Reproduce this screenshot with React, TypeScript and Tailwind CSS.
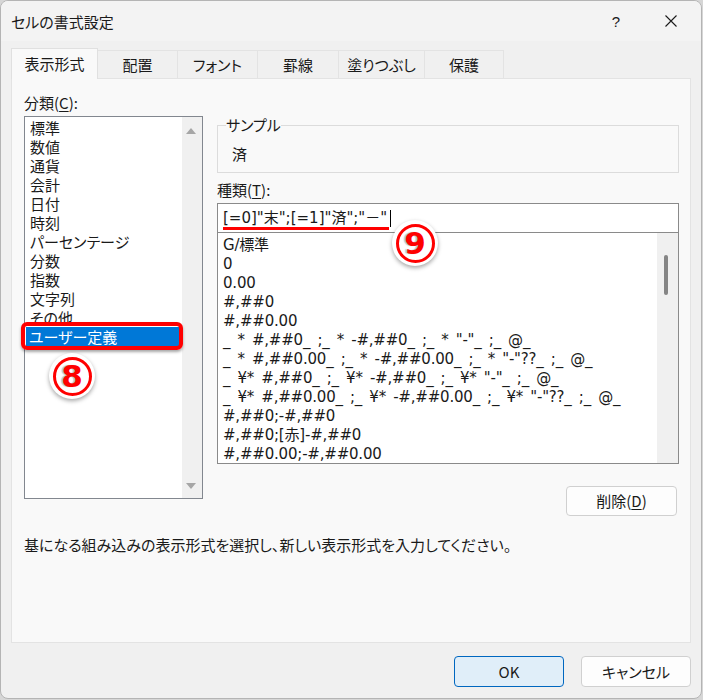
import React from "react";

const categories = [
  "標準",
  "数値",
  "通貨",
  "会計",
  "日付",
  "時刻",
  "パーセンテージ",
  "分数",
  "指数",
  "文字列",
  "その他",
  "ユーザー定義",
];

const formats = [
  "G/標準",
  "0",
  "0.00",
  "#,##0",
  "#,##0.00",
  '_ * #,##0_ ;_ * -#,##0_ ;_ * "-"_ ;_ @_',
  '_ * #,##0.00_ ;_ * -#,##0.00_ ;_ * "-"??_ ;_ @_',
  '_ ¥* #,##0_ ;_ ¥* -#,##0_ ;_ ¥* "-"_ ;_ @_',
  '_ ¥* #,##0.00_ ;_ ¥* -#,##0.00_ ;_ ¥* "-"??_ ;_ @_',
  "#,##0;-#,##0",
  "#,##0;[赤]-#,##0",
  "#,##0.00;-#,##0.00",
];

const tabs = [
  { label: "配置", w: "w-[80px]" },
  { label: "フォント", w: "w-[80px]" },
  { label: "罫線", w: "w-[81px]" },
  { label: "塗りつぶし", w: "w-[86px]" },
  { label: "保護", w: "w-[79px]" },
];

// numbered callout marker (white disc, red ring)
function Marker({ n, className }: { n: string; className: string }) {
  return (
    <div
      className={`absolute z-20 w-[46px] h-[46px] rounded-full bg-white shadow-[0_2px_4px_rgba(0,0,0,0.35)] flex items-center justify-center ${className}`}
    >
      <div className="w-[39px] h-[39px] rounded-full border-[3px] border-[#ff0000] flex items-center justify-center">
        <span className="text-[31px] leading-none font-bold text-[#ff0000] [text-shadow:-2px_0_1px_rgba(0,0,0,0.25)] font-['DejaVu_Sans',sans-serif]">
          {n}
        </span>
      </div>
    </div>
  );
}

export default function App() {
  return (
    <div className="w-[703px] h-[700px] bg-[#d6d6d6] font-['Noto_Sans_CJK_JP',sans-serif] [font-feature-settings:'palt'] text-[15px] text-[#1a1a1a]">
      <div className="w-[702px] h-[699px] rounded-[8px] border border-[#b4b4b4] bg-[#f0f0f0] flex flex-col overflow-hidden">
        {/* title bar */}
        <div className="h-[40px] flex items-center pl-[10px] bg-[#f3f3f3]">
          <span className="text-[15px] leading-[20px] pt-[1px]">セルの書式設定</span>
          <span className="ml-auto text-[15px] font-['Liberation_Sans',sans-serif] leading-none">?</span>
          <svg className="ml-[45px] mr-[24px]" width="12" height="12" viewBox="0 0 12 12">
            <path d="M0.5 0.5L11.5 11.5M11.5 0.5L0.5 11.5" stroke="#1a1a1a" strokeWidth="1.1" />
          </svg>
        </div>

        {/* tabs */}
        <div className="h-[37px] flex items-end pl-[10px]">
          <div className="relative z-10 -mb-px h-[31px] w-[87px] bg-[#f9f9f9] border border-b-0 border-[#e0e0e0] flex items-center justify-center leading-[20px]">
            表示形式
          </div>
          {tabs.map((t) => (
            <div
              key={t.label}
              className={`h-[28px] ${t.w} bg-[#f0f0f0] border border-b-0 border-l-0 border-[#e3e3e3] flex items-center justify-center leading-[20px] pt-[1px]`}
            >
              {t.label}
            </div>
          ))}
        </div>

        {/* tab page */}
        <div className="ml-[10px] w-[680px] h-[565px] bg-[#f9f9f9] border border-[#e3e3e3] pl-[12px] pt-[14px]">
          <div className="flex items-start">
            {/* category list */}
            <div className="w-[179px]">
              <div className="leading-[20px]">
                分類(<span className="underline underline-offset-2">C</span>):
              </div>
              <div className="relative mt-[3px] h-[383px] bg-white border border-[#82878f] flex">
                <div className="flex-1 pt-[1px]">
                  {categories.map((c, i) =>
                    i === categories.length - 1 ? (
                      <div key={c} className="relative mx-[1px] h-[19px] leading-[19px] pl-[3px] bg-[#0078d7] text-white">
                        {c}
                        <div className="absolute -left-[5px] -right-[2px] -top-[5px] -bottom-[4px] rounded-[6px] border-[4px] border-[#ff0000] shadow-[0_2px_3px_rgba(0,0,0,0.35)]" />
                      </div>
                    ) : (
                      <div key={c} className="h-[19px] leading-[19px] pl-[5px]">
                        {c}
                      </div>
                    )
                  )}
                </div>
                <div className="w-[20px] bg-[#f0f0f0] flex flex-col items-center justify-between pt-[11px] pb-[9px] pr-[3px]">
                  <svg width="10" height="6" viewBox="0 0 10 6">
                    <path d="M5 0L10 6H0Z" fill="#a6a6a6" />
                  </svg>
                  <svg width="10" height="6" viewBox="0 0 10 6">
                    <path d="M0 0H10L5 6Z" fill="#a6a6a6" />
                  </svg>
                </div>
                <Marker n="8" className="left-[24px] top-[236px]" />
              </div>
            </div>

            {/* right side */}
            <div className="ml-[14px] w-[462px] flex flex-col">
              <fieldset className="mt-[22px] h-[58px] border border-[#dcdcdc]">
                <legend className="ml-[8px] leading-[20px]">サンプル</legend>
                <div className="pl-[14px] mt-[9px] leading-[20px]">済</div>
              </fieldset>

              <div className="mt-[7px] leading-[20px]">
                種類(<span className="underline underline-offset-2">T</span>):
              </div>

              <div className="relative mt-[3px]">
                <div className="relative h-[30px] bg-white border border-[#8a8a8a] flex items-center pl-[5px] font-['DejaVu_Sans','Noto_Sans_CJK_JP',sans-serif]">
                  <span className="leading-[20px]">[=0]"末";[=1]"済";"－"</span>
                  <span className="ml-[3px] w-px h-[17px] bg-black" />
                  <span className="absolute left-[5px] top-[23px] w-[166px] h-[3px] bg-[#ff0000]" />
                </div>
                <div className="-mt-px h-[232px] bg-white border border-[#8a8a8a] flex">
                  <div className="flex-1 pt-[3px] pl-[5px] whitespace-pre font-['DejaVu_Sans','Noto_Sans_CJK_JP',sans-serif] tracking-[-0.2px] [word-spacing:2.6px]">
                    {formats.map((f) => (
                      <div key={f} className="h-[19px] leading-[19px]">
                        {f}
                      </div>
                    ))}
                  </div>
                  <div className="w-[21px] bg-[#f0f0f0] pl-[7px] pt-[22px]">
                    <div className="w-[4px] h-[40px] rounded-full bg-[#858585]" />
                  </div>
                </div>
                <Marker n="9" className="left-[175px] top-[17px]" />
              </div>

              <button className="self-end mr-[2px] mt-[22px] w-[111px] h-[30px] rounded-[4px] bg-[#fdfdfd] border border-[#d0d0d0] leading-[20px]">
                削除(<span className="underline underline-offset-2">D</span>)
              </button>
            </div>
          </div>

          <div className="mt-[19px] leading-[20px]">
            基になる組み込みの表示形式を選択し、新しい表示形式を入力してください。
          </div>
        </div>

        {/* dialog buttons */}
        <div className="flex justify-end gap-[17px] pr-[10px] mt-[13px]">
          <button className="w-[110px] h-[31px] rounded-[4px] bg-[#e0eef9] border border-[#0067c0] leading-[20px]">
            OK
          </button>
          <button className="w-[110px] h-[31px] rounded-[4px] bg-[#fdfdfd] border border-[#d0d0d0] leading-[20px]">
            キャンセル
          </button>
        </div>
      </div>
    </div>
  );
}
